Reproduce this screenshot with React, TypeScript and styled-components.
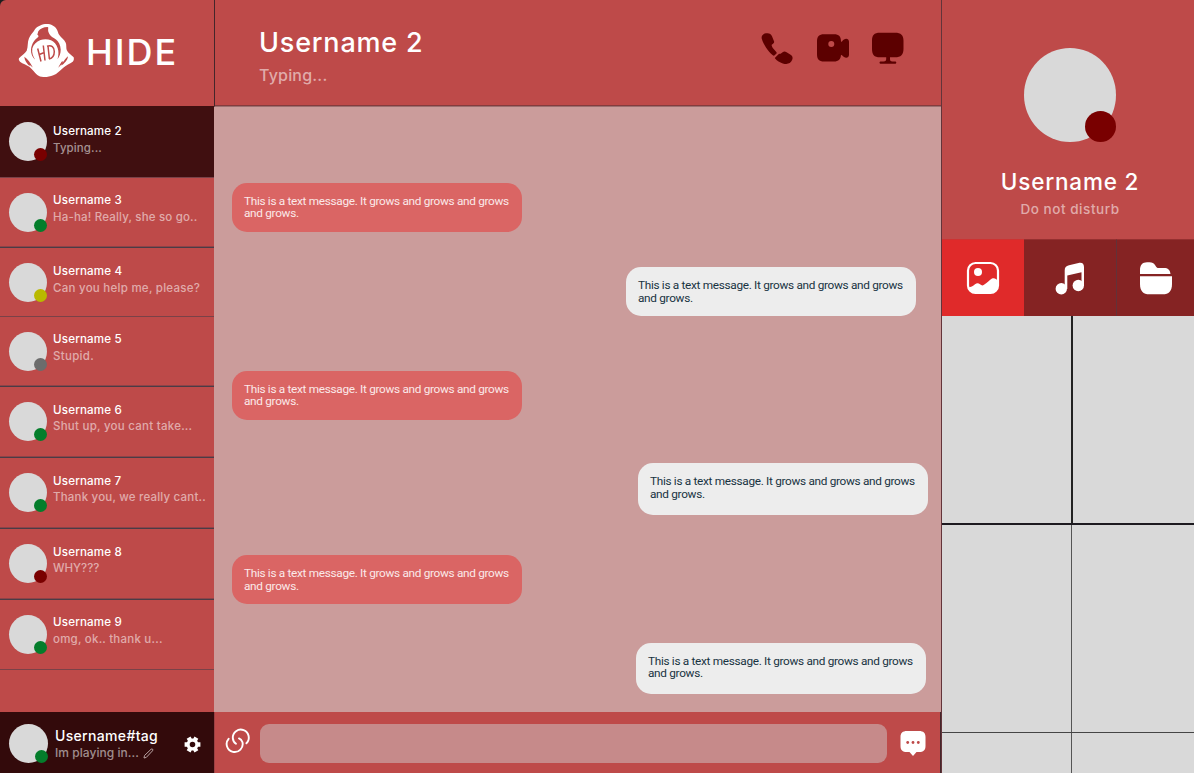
import React from 'react';
import styled, { createGlobalStyle } from 'styled-components';

const Global = createGlobalStyle`
  * { box-sizing: border-box; }
  body { margin: 0; background: #1e1e1e; font-family: Inter, sans-serif; overflow: hidden; }
  h1, h2, p { margin: 0; font-weight: 500; }
`;

const Shell = styled.div`
  display: grid;
  grid-template-columns: 214px 727px 253px;
  width: 1194px;
  height: 773px;
  overflow: hidden;
  border-top-left-radius: 6px;
  background: #be4a49;
`;

const Sidebar = styled.aside`
  display: flex;
  flex-direction: column;
`;

const Brand = styled.div`
  height: 106px;
  display: flex;
  padding: 22px 0 0 18px;
`;

const BrandName = styled.div`
  margin: 8px 0 0 11px;
  color: #fff;
  font-size: 36px;
  line-height: 44px;
  letter-spacing: 2px;
  font-weight: 500;
`;

const Label = styled.p<{ $size: number; $line: number; $space?: number; $dim?: boolean; $top?: number; $weight?: number }>`
  font-size: ${p => p.$size}px;
  line-height: ${p => p.$line}px;
  letter-spacing: ${p => p.$space ?? 0}px;
  margin-top: ${p => p.$top ?? 0}px;
  color: ${p => (p.$dim ? 'rgba(255,255,255,0.55)' : '#fff')};
  font-weight: ${p => p.$weight ?? 500};
  white-space: pre;
`;

const Contact = styled.div<{ $height: number; $active?: boolean; $bold?: boolean }>`
  height: ${p => p.$height}px;
  flex: none;
  display: flex;
  padding: ${p => (p.$active ? 16 : 15)}px 0 0 9px;
  background: ${p => (p.$active ? '#400f10' : 'transparent')};
  border-bottom: 1px solid ${p => (p.$bold ? '#4b3c46' : '#7a4248')};
  box-shadow: ${p => (p.$bold ? 'inset 0 -1px 0 #8e4348' : 'none')};
`;

const ContactText = styled.div<{ $lift: number }>`
  margin: ${p => p.$lift}px 0 0 6px;
`;

const Avatar = styled.div<{ $w: number; $h: number }>`
  position: relative;
  flex: none;
  width: ${p => p.$w}px;
  height: ${p => p.$h}px;
  border-radius: 50%;
  background: #d9d9d9;
`;

const Status = styled.i<{ $size: number; $color: string }>`
  position: absolute;
  right: 0;
  bottom: 0;
  width: ${p => p.$size}px;
  height: ${p => p.$size}px;
  border-radius: 50%;
  background: ${p => p.$color};
`;

const Account = styled.div`
  height: 61px;
  margin-top: auto;
  display: flex;
  padding: 12px 0 0 9px;
  background: #330a0b;
`;

const AccountText = styled.div`
  width: 121px;
  margin: 3px 0 0 7px;
`;

const StatusLine = styled.div`
  display: flex;
  align-items: center;
  gap: 4px;
`;

const Gear = styled.svg`
  margin: 12px 0 0 8px;
`;

const Main = styled.main`
  display: flex;
  flex-direction: column;
  min-width: 0;
`;

const Header = styled.header`
  height: 107px;
  flex: none;
  display: flex;
  justify-content: space-between;
  padding: 27px 36px 0 44px;
  border-left: 1px solid #44262b;
  border-bottom: 1px solid #9b7070;
  box-shadow: inset 0 -1px 0 #853b3d;
`;

const CallActions = styled.div`
  display: flex;
  gap: 21.5px;
  margin-top: 4px;
`;

const Thread = styled.section`
  height: 605px;
  flex: none;
  padding-top: 75.5px;
  display: flex;
  flex-direction: column;
  background: #cb9c9b;
`;

const Bubble = styled.div<{ $mine?: boolean; $edge: number; $after: number; $height: number }>`
  flex: none;
  width: 290px;
  height: ${p => p.$height}px;
  align-self: ${p => (p.$mine ? 'flex-end' : 'flex-start')};
  margin: ${p => (p.$mine ? `0 ${p.$edge}px ${p.$after}px 0` : `0 0 ${p.$after}px ${p.$edge}px`)};
  padding: 12px 8px 0 12px;
  border-radius: 15px;
  background: ${p => (p.$mine ? '#ededed' : '#da6564')};
  color: ${p => (p.$mine ? '#183342' : '#fbe9e9')};
  font: 400 11.8px/12.5px Roboto, sans-serif;
  letter-spacing: -0.31px;
`;

const Composer = styled.footer`
  height: 61px;
  display: flex;
  align-items: flex-start;
  padding: 12px 13px 0 10px;
  border-left: 1px solid #9c4144;
  border-right: 1px solid #44262b;

  > * {
    flex: none;
  }
`;

const Field = styled.div`
  width: 627px;
  height: 39px;
  margin: 0 12px 0 9px;
  border-radius: 9px;
  background: #c68a8a;
`;

const Profile = styled.aside`
  display: flex;
  flex-direction: column;
  border-left: 1px solid #63343a;
`;

const Identity = styled.div`
  height: 239px;
  display: flex;
  flex-direction: column;
  align-items: center;
  padding: 48px 0 0 4px;
`;

const Tabs = styled.div`
  display: grid;
  grid-template-columns: 82px 92px 78px;
  height: 77px;
`;

const Tab = styled.div<{ $on?: boolean; $rule?: boolean }>`
  display: flex;
  align-items: center;
  justify-content: center;
  background: ${p => (p.$on ? '#e02a2a' : '#852323')};
  border-left: ${p => (p.$rule ? '1px solid #623238' : 'none')};
  border-top: 1px solid ${p => (p.$on ? '#ce3232' : '#953030')};
`;

const Gallery = styled.div`
  flex: 1;
  display: flex;
  flex-direction: column;
  background: #d9d9d9;
`;

const PhotoRow = styled.div<{ $height: number; $rule: number }>`
  display: flex;
  flex: none;
  height: ${p => p.$height}px;
  border-bottom: ${p => p.$rule}px solid ${p => (p.$rule > 1 ? '#1d1a20' : '#454545')};
`;

const Photo = styled.div<{ $width?: number; $rule?: number }>`
  flex: ${p => (p.$width ? 'none' : '1')};
  width: ${p => (p.$width ? `${p.$width}px` : 'auto')};
  border-right: ${p => p.$rule ?? 0}px solid ${p => ((p.$rule ?? 0) > 1 ? '#222' : '#555')};
`;

const GREEN = '#047d2b';
const DARK_RED = '#790000';

const contacts = [
  { name: 'Username 2', text: 'Typing...', color: DARK_RED, height: 72, lift: 1, space: 0.1, bold: false },
  { name: 'Username 3', text: 'Ha-ha! Really, she so go..', color: GREEN, height: 70, lift: -1, space: 0.18, bold: true },
  { name: 'Username 4', text: 'Can you help me, please?', color: '#b9b900', height: 69, lift: 0, space: 0.26, bold: false },
  { name: 'Username 5', text: 'Stupid.', color: '#6c6c6c', height: 70, lift: -1, space: 0.3, bold: true },
  { name: 'Username 6', text: 'Shut up, you cant take...', color: GREEN, height: 71, lift: -0.5, space: 0.25, bold: true },
  { name: 'Username 7', text: 'Thank you, we really cant..', color: GREEN, height: 71, lift: -0.5, space: 0.2, bold: true },
  { name: 'Username 8', text: 'WHY???', color: DARK_RED, height: 71, lift: -0.5, space: 0, bold: true },
  { name: 'Username 9', text: 'omg, ok.. thank u...', color: GREEN, height: 70, lift: -1, space: 0.22, bold: false },
];

const bubbles = [
  { mine: false, edge: 18, height: 49, after: 35.5 },
  { mine: true, edge: 25, height: 49, after: 54.5 },
  { mine: false, edge: 18, height: 49, after: 43.5 },
  { mine: true, edge: 13, height: 52, after: 40 },
  { mine: false, edge: 18, height: 49, after: 38.5 },
  { mine: true, edge: 15, height: 51.5, after: 0 },
];

const Logo = () => (
  <svg width="57" height="56" viewBox="0 0 57 56">
    <path fill="#fff" d="M28.700 2C33 2 37 4 38.700 7.300 40 9.500 40 11.500 41.300 13c2 2.800 5 4.500 6.400 7.700 1 2.500.3 5 1 7.300 1.300 3.500 5 5 7 7.300.4 2 .2 3.300-1 4.400-3 2-6.400 3.500-9.400 6-3.500 3-6 6-10 7.600-3.300 1.400-7 1.900-10 1.700-2.500-.1-4.300-.8-6-2-3-2.500-5-6-8-8.300-3-2-6.300-2.800-9.300-5-1-1.200-1.500-2.200-1-3.400 2-2.800 6-4.500 7.700-7.600 1.600-4 .5-8.500 2.300-12.400 1.300-3.200 4-5.500 6-9C19.500 4 24.500 2 28.700 2Z" />
    <path fill="#be4a49" d="M20.300 9.200C22 6.700 25.500 5 29.500 5c.8.200.9.700.7 1.500-.4 2 .2 4 1.300 5.700 1.700 2.600 4 3.600 6.500 5.300 2.500 2 4.500 5.500 4.700 10 0 3.700-1 7-3.200 9.800 1.200-4.300 1.300-7.500.2-11C38.500 22.500 36 19.700 33 18.300c-3-1.300-7-1.400-10.500-.3-4.200 1.500-7.200 4.700-8.200 8.500-.6 4.500.7 8 3 11.300-3-2.300-4.500-6.300-4.300-10.300.2-3 1.300-6 3-8.300 1.500-2 3-3.200 4.300-4.200.3-1 .1-1.800-1-2.200Z" />
    <path fill="#be4a49" d="M6.300 34.700c3.500 2.500 6.200 6 8.500 10.800l-3.300-2.800.3 1.500C9 41.500 6.500 38.500 6.300 34.700ZM50 34.200c-.3 4-4 7.500-6.500 9.300l.2-1.300-3.500 3.500c1.500-3 2.500-5 4.300-7l.2 1.700c1.600-2 3-4.500 5.300-6.200Z" />
    <path fill="none" stroke="#be4a49" strokeWidth="1.500" d="m19.700 26.500 3.300 13m2.300-16 1.700 15m-5.700-6 5-2M30 24l1.400 13M29 24.200c4.500-1.500 7.300 1 7.300 5.300 0 4-2 6.700-5.300 7.500" />
  </svg>
);

const Phone = () => (
  <svg width="34" height="34" viewBox="0 0 34 34" fill="#5c0000">
    <path d="M6 2.300c3-.6 5 .5 6 3l2 5c.5 1.400-.5 2.300-2 3.300-.8.7 0 2.100.8 3.300l3.500 4.200c.6.8.5 1.100-.1 1.700l-1.500 1.500c-.6.7-1.300.6-2.200-.2C7.600 19.800 3 12.800 1.700 7.500 1.200 5 3 2.700 6 2.300Z" />
    <path d="m15.500 26.200 2.500-2.500c.7-.7 1.500-1.400 2.600-.9l2-1.500c1.400-1.200 2.500-1 4 0l4 2.500c2 1.200 2.500 3.200 1.500 5.300-1.700 3.800-5 4.500-9.300 3.300-3-.9-5.800-2.800-7.500-4.700-.6-.8-.5-.8.200-1.500Z" />
  </svg>
);

const Camera = () => (
  <svg width="34" height="34" viewBox="0 0 34 34" fill="#5c0000">
    <path fillRule="evenodd" d="M8 3.300h10c5 0 7 2.500 7 7v13c0 5-2.500 7.300-7 7.300H8c-5 0-7-2.500-7-7.300v-13c0-4.500 2-7 7-7Zm7.300 6.800a3 3 0 1 0 0 6 3 3 0 0 0 0-6Z" />
    <path d="M24.500 11c1.500 0 1.800-1.500 3.500-2.600 2.200-1.400 5-.6 5 2.400v13c0 3-2.800 3.700-5 2.300-1.500-1-2-2.300-3.500-2.300Z" />
  </svg>
);

const Monitor = () => (
  <svg width="34" height="34" viewBox="0 0 34 34" fill="#5c0000">
    <path d="M9 1.700h15c6 0 8.500 2.500 8.500 8v8c0 6-2.500 8.500-8.500 8.500h-5v1.500c0 2 .3 2.700 2.500 2.700h2.300c2 0 2 2.300 0 2.300H10c-2 0-2-2.300 0-2.300h2.500c2.200 0 2.700-.7 2.700-2.700v-1.500H9c-6 0-8-2.500-8-8.500v-8c0-5.500 2-8 8-8Z" />
  </svg>
);

const Picture = () => (
  <svg width="34" height="34" viewBox="0 0 34 34">
    <rect x="2" y="2" width="30" height="30" rx="7.500" fill="none" stroke="#fff" strokeWidth="2.200" />
    <circle cx="12" cy="11" r="4" fill="#fff" />
    <path fill="#fff" d="M2 26.500c3-.2 5-1.500 7-3.200 2-1.600 3.500-1.300 5 0 1.500 1.200 2.500 1.500 4 .5 3-1.500 5-4.500 8-6.200 2.500-1 4 .2 6 2.200V24c0 6-3 8-8 8H11c-5 0-8-1.500-9-5.500Z" />
  </svg>
);

const Music = () => (
  <svg width="34" height="34" viewBox="0 0 34 34" fill="#fff">
    <path d="M11.700 27V9.500c0-3 1.200-4.300 4.300-5.200l9.500-2.400c3.500-.8 5.500.6 5.500 4V25h-2.500V11.200l-14.200 3.300V28Z" />
    <circle cx="8.300" cy="27.800" r="5.700" />
    <circle cx="25.300" cy="24.500" r="5.700" />
  </svg>
);

const Folder = () => (
  <svg width="34" height="34" viewBox="0 0 34 34" fill="#fff">
    <path d="M1 13V9c0-5 2.500-7.700 7-7.700h2.500c2.800 0 4.300 1 5.500 2.800l1.300 1.800c.8 1 1.600 1.200 3 1.200H25c4 0 6 2 6.500 5.900Z" />
    <path d="M1 15.300h32V23c0 7-3 10.300-9.500 10.300h-13C4 33.300 1 30 1 23Z" />
  </svg>
);

const App = () => (
  <Shell>
    <Global />
    <Sidebar>
      <Brand>
        <Logo />
        <BrandName>HIDE</BrandName>
      </Brand>
      {contacts.map((c, i) => (
        <Contact key={c.name} $height={c.height} $active={i === 0} $bold={c.bold}>
          <Avatar $w={38} $h={39}>
            <Status $size={13} $color={c.color} />
          </Avatar>
          <ContactText $lift={c.lift}>
            <Label $size={11.6} $line={16} $space={0.17}>{c.name}</Label>
            <Label $size={11.5} $line={17} $top={0.6} $space={c.space} $dim>{c.text}</Label>
          </ContactText>
        </Contact>
      ))}
      <Account>
        <Avatar $w={39} $h={39}>
          <Status $size={13} $color={GREEN} />
        </Avatar>
        <AccountText>
          <Label $size={14} $line={18} $space={0.33}>Username#tag</Label>
          <StatusLine>
            <Label $size={12} $line={16} $space={0.05} $dim>Im playing in...</Label>
            <svg width="11" height="11" viewBox="0 0 11 11" fill="none" stroke="#b9a3a3">
              <path d="m1 10 .5-2.500 6.500-6.200c1.300-1 2.500.2 1.500 1.500L3.300 9.400Z" />
            </svg>
          </StatusLine>
        </AccountText>
        <Gear width="17" height="17" viewBox="0 0 17 17">
          <path fill="none" stroke="#fff" strokeWidth="4.400" d="M4.600 1.600l2 3.500m3.800 6.800 2 3.500M12.400 1.600l-2 3.500m-3.800 6.800-2 3.500M.6 8.500h4m7.800 0h4" />
          <circle cx="8.500" cy="8.500" r="4.400" fill="none" stroke="#fff" strokeWidth="3.200" />
        </Gear>
      </Account>
    </Sidebar>
    <Main>
      <Header>
        <div>
          <Label $size={27} $line={31} $space={0.8}>Username 2</Label>
          <Label $size={16} $line={22} $top={6} $space={0.2} $dim>Typing...</Label>
        </div>
        <CallActions>
          <Phone />
          <Camera />
          <Monitor />
        </CallActions>
      </Header>
      <Thread>
        {bubbles.map((b, i) => (
          <Bubble key={i} $mine={b.mine} $edge={b.edge} $height={b.height} $after={b.after}>
            This is a text message. It grows and grows and grows and grows.
          </Bubble>
        ))}
      </Thread>
      <Composer>
        <svg width="26" height="35" viewBox="0 0 26 35" fill="none" stroke="#fff" strokeWidth="1.900" strokeLinecap="round">
          <path d="M3.600 14.800a8 8 0 1 0 13.800 3.200c-.7-1.800-1.900-3-3.400-3.600" />
          <path d="M21.400 19.300a8 8 0 1 0-13.600-5.200c.2 2.400 1.200 4.300 3.200 5.600" />
        </svg>
        <Field />
        <svg width="28" height="36" viewBox="0 0 28 36">
          <path fill="#fff" d="M8 7h12c4.500 0 6.500 2 6.500 6v9c0 4-2 6-6.500 6h-2.500L14 32l-3.500-4H8c-4.500 0-6.500-2-6.500-6v-9c0-4 2-6 6.500-6Z" />
          <g fill="#be4a49">
            <circle cx="8.700" cy="18.500" r="1.400" />
            <circle cx="14" cy="18.500" r="1.400" />
            <circle cx="19.300" cy="18.500" r="1.400" />
          </g>
        </svg>
      </Composer>
    </Main>
    <Profile>
      <Identity>
        <Avatar $w={92} $h={94}>
          <Status $size={31} $color={DARK_RED} />
        </Avatar>
        <Label $size={22.5} $line={28} $top={26} $space={0.8}>Username 2</Label>
        <Label $size={13.5} $line={18} $top={4} $space={0.55} $dim>Do not disturb</Label>
      </Identity>
      <Tabs>
        <Tab $on><Picture /></Tab>
        <Tab><Music /></Tab>
        <Tab $rule><Folder /></Tab>
      </Tabs>
      <Gallery>
        <PhotoRow $height={209} $rule={2}>
          <Photo $width={131} $rule={2} />
          <Photo />
        </PhotoRow>
        <PhotoRow $height={208} $rule={1}>
          <Photo $width={130} $rule={1} />
          <Photo />
        </PhotoRow>
        <PhotoRow $height={40} $rule={0}>
          <Photo $width={130} $rule={1} />
          <Photo />
        </PhotoRow>
      </Gallery>
    </Profile>
  </Shell>
);

export default App;
